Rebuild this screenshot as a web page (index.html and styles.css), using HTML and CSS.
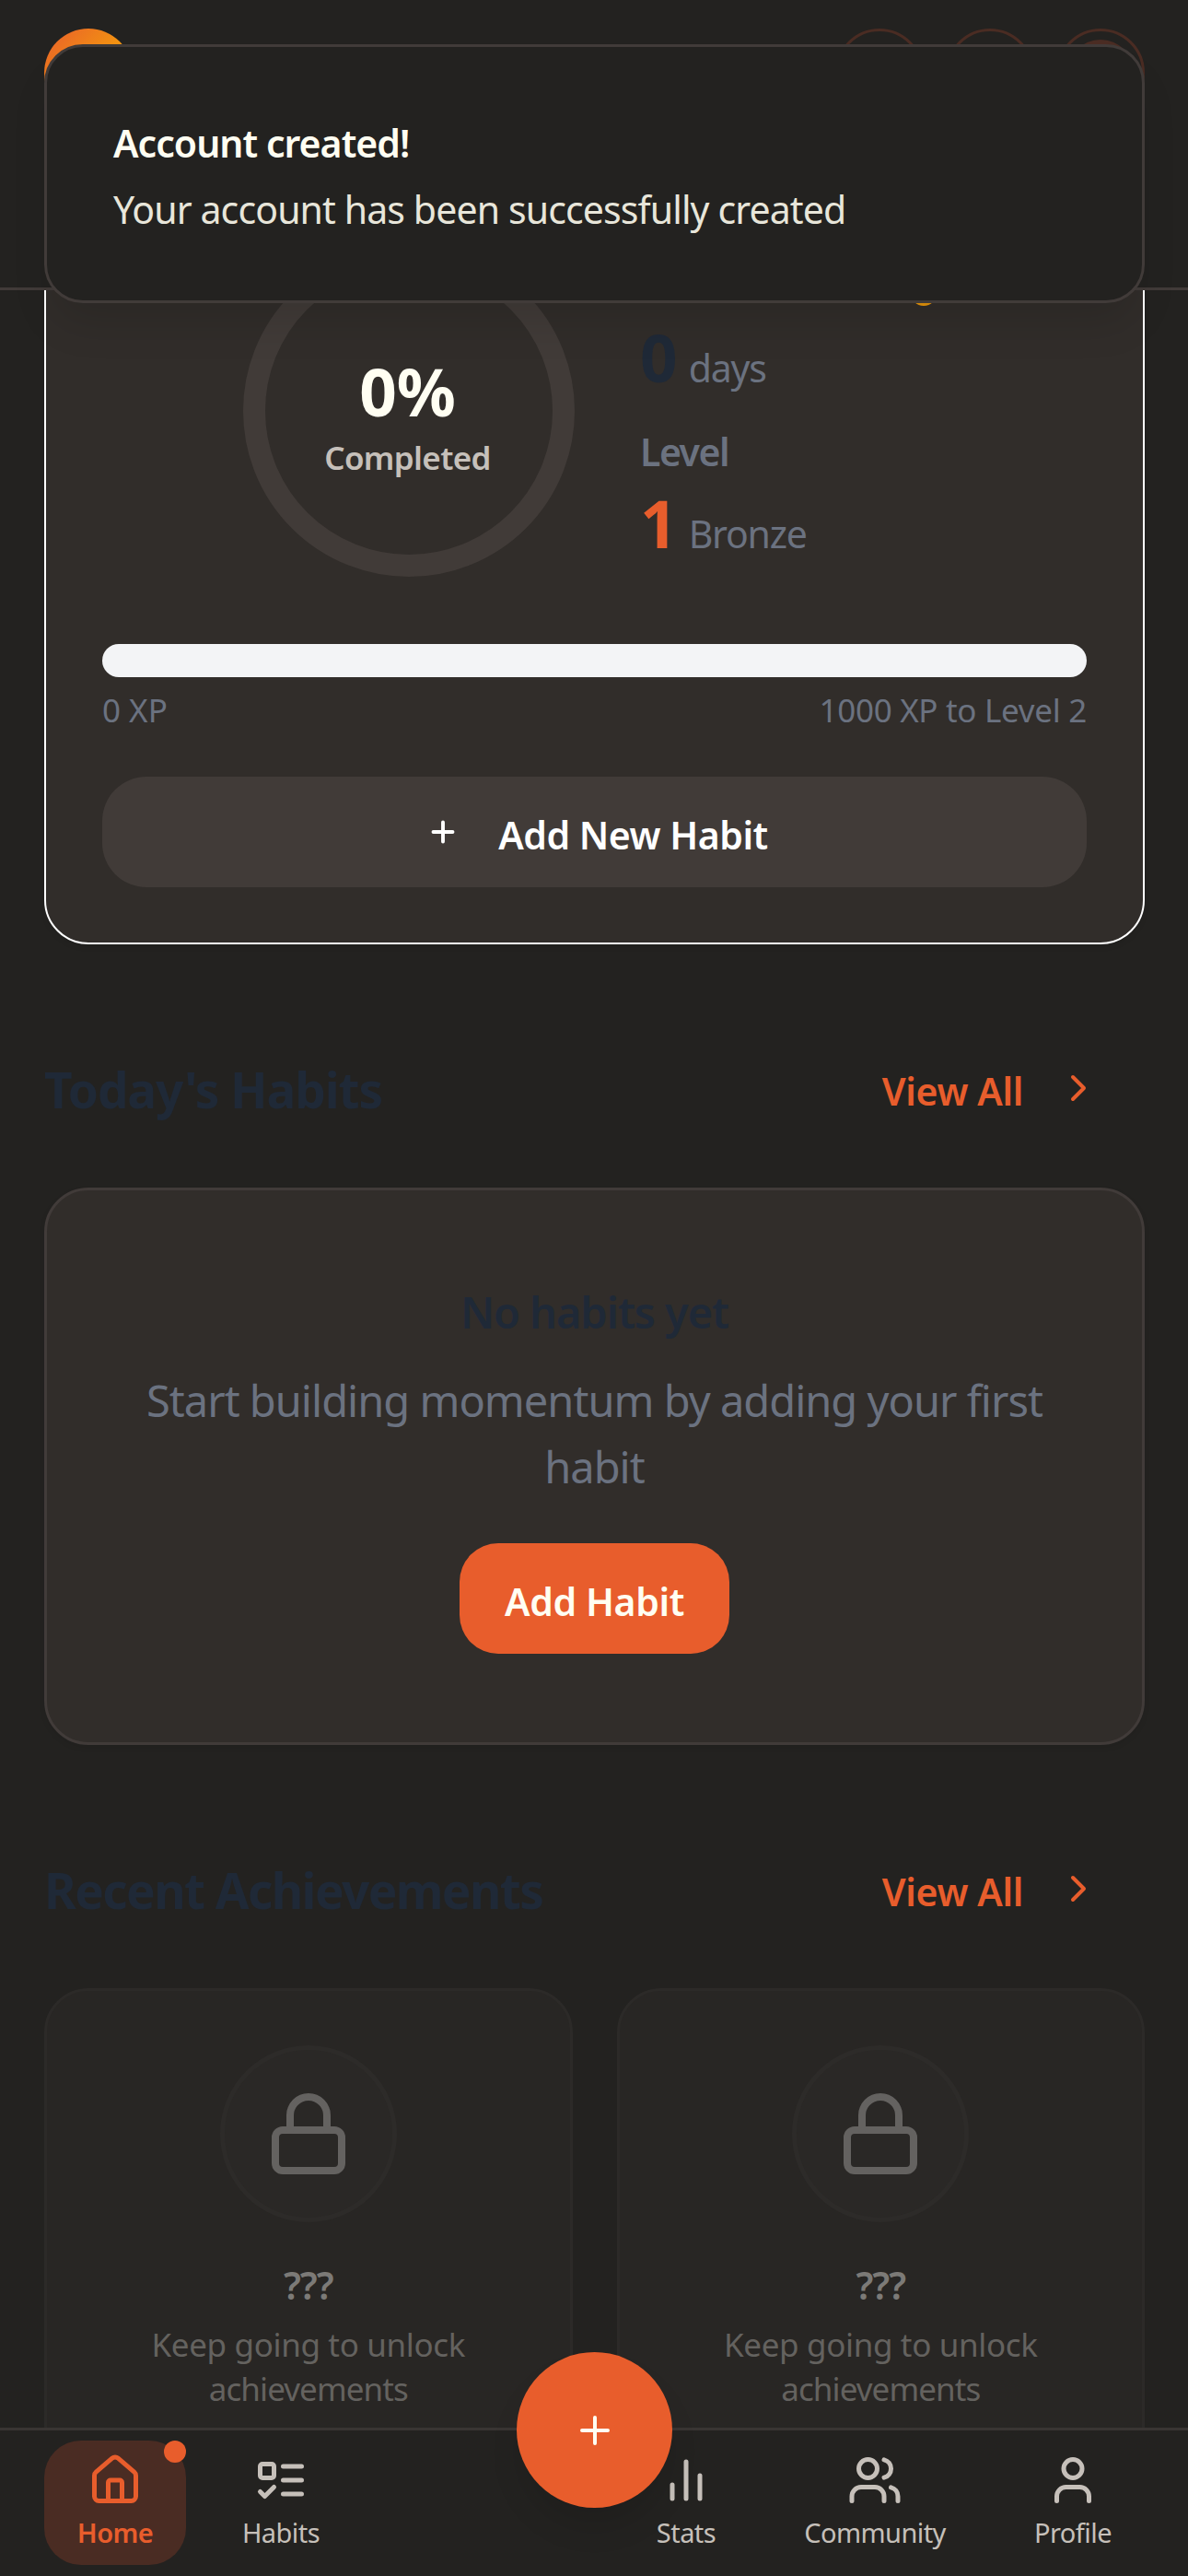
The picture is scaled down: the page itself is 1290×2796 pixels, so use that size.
FILE: index.html
```
<!DOCTYPE html>
<html lang="en">
<head>
<meta charset="utf-8">
<title>Habits</title>
<link rel="stylesheet" href="styles.css">
</head>
<body>
<header class="header">
  <div class="logo"></div>
  <div class="header-actions">
    <div class="round-button"></div>
    <div class="round-button"></div>
    <div class="round-button"><div class="avatar"></div></div>
  </div>
</header>

<main class="main">
  <section class="card progress-card">
    <div class="progress-row">
      <div class="ring">
        <div class="ring-value">0%</div>
        <div class="ring-label">Completed</div>
      </div>
      <div class="stats">
        <div class="streak-icon">
          <svg width="28" height="28" viewBox="0 0 28 28"><circle cx="14" cy="14" r="14" fill="#e8960c"/></svg>
        </div>
        <div class="stat"><span class="stat-value">0</span><span class="stat-unit">days</span></div>
        <div class="stat-title">Level</div>
        <div class="stat"><span class="stat-value accent">1</span><span class="stat-unit">Bronze</span></div>
      </div>
    </div>
    <div class="xp-bar"></div>
    <div class="xp-row"><span>0 XP</span><span class="xp-target">1000 XP to Level 2</span></div>
    <button class="add-new">
      <svg class="icon bold" width="36" height="36" viewBox="0 0 24 24"><path d="M5 12h14M12 5v14"/></svg>
      <span>Add New Habit</span>
    </button>
  </section>

  <div class="section-head">
    <h2 class="today">Today's Habits</h2>
    <a class="view-all"><span>View All</span><svg class="icon" width="48" height="48" viewBox="0 0 24 24"><path d="m9 6 6 6-6 6"/></svg></a>
  </div>
  <section class="card empty-card">
    <h3>No habits yet</h3>
    <p>Start building momentum by adding your first habit</p>
    <button class="add-habit"><span>Add Habit</span></button>
  </section>

  <div class="section-head">
    <h2>Recent Achievements</h2>
    <a class="view-all"><span>View All</span><svg class="icon" width="48" height="48" viewBox="0 0 24 24"><path d="m9 6 6 6-6 6"/></svg></a>
  </div>
  <div class="achievements">
    <section class="achievement">
      <div class="badge"><svg class="icon" width="96" height="96" viewBox="0 0 24 24"><rect x="3" y="11" width="18" height="11" rx="2"/><path d="M7 11V7a5 5 0 0 1 10 0v4"/></svg></div>
      <div class="achievement-title">???</div>
      <div class="achievement-text">Keep going to unlock <span class="tight">achievements</span></div>
    </section>
    <section class="achievement">
      <div class="badge"><svg class="icon" width="96" height="96" viewBox="0 0 24 24"><rect x="3" y="11" width="18" height="11" rx="2"/><path d="M7 11V7a5 5 0 0 1 10 0v4"/></svg></div>
      <div class="achievement-title">???</div>
      <div class="achievement-text">Keep going to unlock <span class="tight">achievements</span></div>
    </section>
  </div>
</main>

<nav class="nav">
  <a class="nav-item home active">
    <svg class="icon" width="60" height="60" viewBox="0 0 24 24"><path d="M15 21v-8a1 1 0 0 0-1-1h-4a1 1 0 0 0-1 1v8"/><path d="M3 10a2 2 0 0 1 .709-1.528l7-5.999a2 2 0 0 1 2.582 0l7 5.999A2 2 0 0 1 21 10v9a2 2 0 0 1-2 2H5a2 2 0 0 1-2-2z"/></svg>
    <span>Home</span>
    <i class="dot"></i>
  </a>
  <a class="nav-item habits">
    <svg class="icon" width="60" height="60" viewBox="0 0 24 24"><rect x="3" y="5" width="6" height="6" rx="1"/><path d="m3 17 2 2 4-4M13 6h8M13 12h8M13 18h8"/></svg>
    <span>Habits</span>
  </a>
  <a class="nav-item stats-link">
    <svg class="icon" width="60" height="60" viewBox="0 0 24 24"><path d="M18 20V10M12 20V4M6 20v-6"/></svg>
    <span>Stats</span>
  </a>
  <a class="nav-item community">
    <svg class="icon" width="60" height="60" viewBox="0 0 24 24"><path d="M16 21v-2a4 4 0 0 0-4-4H6a4 4 0 0 0-4 4v2"/><circle cx="9" cy="7" r="4"/><path d="M22 21v-2a4 4 0 0 0-3-3.87M16 3.13a4 4 0 0 1 0 7.75"/></svg>
    <span>Community</span>
  </a>
  <a class="nav-item profile">
    <svg class="icon" width="60" height="60" viewBox="0 0 24 24"><path d="M19 21v-2a4 4 0 0 0-4-4H9a4 4 0 0 0-4 4v2"/><circle cx="12" cy="7" r="4"/></svg>
    <span>Profile</span>
  </a>
  <button class="fab"><svg class="icon" width="48" height="48" viewBox="0 0 24 24"><path d="M5 12h14M12 5v14"/></svg></button>
</nav>

<div class="toast">
  <div class="toast-title">Account created!</div>
  <div class="toast-text">Your account has been successfully created</div>
</div>
</body>
</html>
```
FILE: styles.css
```
* {
  box-sizing: border-box;
}

body {
  margin: 0;
  position: relative;
  width: 1290px;
  height: 2796px;
  overflow: hidden;
  background: #232220;
  color: #6b7280;
  font-family: "Noto Sans", "Open Sans", sans-serif;
}

h2, h3, p {
  margin: 0;
}

button {
  border: 0;
  font-family: inherit;
  padding: 0;
}

.icon {
  display: block;
  flex: none;
  fill: none;
  stroke: currentColor;
  stroke-width: 2;
  stroke-linecap: round;
  stroke-linejoin: round;
}

.bold {
  stroke-width: 2.6;
}

/* Header */
.header {
  position: relative;
  z-index: 2;
  height: 315px;
  padding: 31px 47px 0 48px;
  display: flex;
  justify-content: space-between;
  background: #232220;
  border-bottom: 3px solid #413b39;
}

.logo {
  width: 96px;
  height: 96px;
  border-radius: 50%;
  background: linear-gradient(135deg, #e85d2c, #f59e0b 60%);
}

.header-actions {
  display: flex;
  gap: 24px;
}

.round-button {
  width: 96px;
  height: 96px;
  padding: 9px;
  border: 3px solid #4a2c23;
  border-radius: 50%;
}

.avatar {
  width: 72px;
  height: 72px;
  border-radius: 50%;
  background: #4a2c23;
}

/* Content */
.main {
  padding: 0 47px 0 48px;
}

.card {
  background: #312d2a;
  border: 3px solid #413b39;
  border-radius: 48px;
  box-shadow: 0 3px 6px rgba(0, 0, 0, 0.08);
}

.progress-card {
  margin-top: -120px;
  border: 2px solid #fff;
  padding: 69px 61px 60px;
}

.progress-row {
  display: flex;
  gap: 71px;
  padding-left: 153px;
}

.ring {
  width: 360px;
  height: 360px;
  padding-top: 99px;
  border: 24px solid #413b38;
  border-radius: 50%;
  text-align: center;
}

.ring-value {
  margin-left: -3px;
  font-size: 71px;
  font-weight: 700;
  line-height: 72px;
  color: #fffef2;
}

.ring-label {
  margin: 12px 0 0 -3px;
  font-size: 35px;
  font-weight: 600;
  line-height: 48px;
  letter-spacing: -0.65px;
  color: #c6c0ba;
}

.streak-icon {
  display: flex;
  align-items: flex-end;
  height: 66px;
  margin-bottom: 8px;
  padding-left: 294px;
}

.streak-icon svg {
  display: block;
}

.stat {
  display: flex;
  align-items: baseline;
  gap: 12px;
  height: 96px;
}

.stat-value {
  font-size: 71px;
  font-weight: 700;
  line-height: 96px;
  color: #1f2937;
}

.accent {
  color: #e85d2c;
}

.stat-unit {
  font-size: 41px;
  line-height: 60px;
  letter-spacing: -1.2px;
}

.stat-title {
  margin-top: 24px;
  font-size: 41px;
  font-weight: 600;
  line-height: 60px;
  letter-spacing: -1.5px;
}

.xp-bar {
  height: 36px;
  margin-top: 73px;
  border-radius: 18px;
  background: #f3f4f6;
}

.xp-row {
  display: flex;
  justify-content: space-between;
  margin-top: 12px;
  font-size: 35px;
  line-height: 48px;
}

.xp-target {
  letter-spacing: -0.3px;
}

.add-new {
  display: flex;
  align-items: center;
  justify-content: center;
  gap: 42px;
  width: 100%;
  height: 120px;
  margin-top: 48px;
  padding-left: 6px;
  border-radius: 48px;
  background: #413b38;
  color: #fff;
  font-size: 41px;
  font-weight: 600;
  letter-spacing: -0.48px;
}

.add-new span,
.add-habit span {
  padding-top: 5px;
}

.section-head {
  display: flex;
  align-items: center;
  justify-content: space-between;
  height: 84px;
  margin: 115px 0 65px;
}

.section-head h2 {
  padding-top: 1px;
  font-size: 53px;
  font-weight: 700;
  line-height: 84px;
  letter-spacing: -1.55px;
  color: #1f2937;
}

.section-head .today {
  letter-spacing: -1.05px;
}

.view-all {
  display: flex;
  align-items: center;
  gap: 36px;
  padding: 0 48px 2px 0;
  color: #e85d2c;
  font-size: 41px;
  font-weight: 600;
  line-height: 60px;
  letter-spacing: -0.37px;
}

.view-all span {
  padding-top: 6px;
}

.empty-card {
  display: flex;
  flex-direction: column;
  align-items: center;
  height: 605px;
  padding: 90px 96px 0;
  text-align: center;
}

.empty-card h3 {
  font-size: 47px;
  font-weight: 600;
  line-height: 84px;
  letter-spacing: -1.1px;
  color: #1f2937;
}

.empty-card p {
  margin-top: 18px;
  font-size: 47px;
  line-height: 72px;
  letter-spacing: -0.98px;
}

.add-habit {
  width: 293px;
  height: 120px;
  margin-top: 47px;
  border-radius: 42px;
  background: #e85d2c;
  color: #fffef2;
  font-size: 41px;
  font-weight: 600;
  letter-spacing: -0.4px;
  display: flex;
  align-items: center;
  justify-content: center;
}

/* Achievements */
.achievements {
  display: grid;
  grid-template-columns: 1fr 1fr;
  gap: 48px;
}

.achievement {
  display: flex;
  flex-direction: column;
  align-items: center;
  height: 560px;
  padding: 59px 60px 0;
  background: #282624;
  border: 3px solid #2c2a28;
  border-radius: 48px;
  text-align: center;
}

.badge {
  display: flex;
  align-items: center;
  justify-content: center;
  width: 192px;
  height: 192px;
  border: 5px solid #2d2b29;
  border-radius: 50%;
  background: #2a2826;
  color: #646260;
}

.achievement-title {
  margin-top: 38px;
  font-size: 41px;
  font-weight: 600;
  line-height: 60px;
  letter-spacing: -1px;
  color: #7c7a77;
}

.achievement-text {
  width: 400px;
  margin-top: 11px;
  font-size: 35px;
  line-height: 48px;
  letter-spacing: -0.35px;
  color: #64625f;
}

.tight {
  letter-spacing: -0.93px;
}

/* Bottom navigation */
.nav {
  position: absolute;
  left: 0;
  bottom: 0;
  z-index: 3;
  display: grid;
  grid-template-columns: 154px 206px 232px 210px 200px 38px 154px;
  width: 1290px;
  height: 161px;
  padding: 11px 48px 0;
  border-top: 3px solid #393533;
  background: #232220;
}

.nav-item {
  position: relative;
  display: flex;
  flex-direction: column;
  align-items: center;
  height: 135px;
  padding-top: 13px;
  border-radius: 40px;
  color: #c6c0ba;
  font-size: 29px;
  line-height: 42px;
  letter-spacing: -0.55px;
}

.nav-item span {
  margin-top: 6px;
}

.active {
  background: #4a2c23;
  color: #e85d2c;
  font-weight: 600;
}

.stats-link {
  grid-column: 4;
}

.profile {
  grid-column: 7;
}

.dot {
  position: absolute;
  top: 0;
  right: 0;
  width: 24px;
  height: 24px;
  border-radius: 50%;
  background: #e85d2c;
}

.fab {
  position: absolute;
  left: 561px;
  top: -85px;
  display: flex;
  align-items: center;
  justify-content: center;
  width: 169px;
  height: 169px;
  border-radius: 50%;
  background: #e85d2c;
  color: #fffef2;
  box-shadow: 0 24px 36px -6px rgba(0, 0, 0, 0.12);
}

/* Toast */
.toast {
  position: absolute;
  left: 48px;
  top: 48px;
  z-index: 4;
  width: 1195px;
  height: 281px;
  padding: 74px 72px 0;
  border: 3px solid #413b39;
  border-radius: 42px;
  background: #232220;
  box-shadow: 0 30px 45px -9px rgba(0, 0, 0, 0.12);
  font-size: 41px;
  line-height: 60px;
}

.toast-title {
  color: #fffef2;
  font-weight: 600;
  letter-spacing: -0.96px;
}

.toast-text {
  margin-top: 12px;
  color: #e8e6da;
  letter-spacing: -0.88px;
}
```
